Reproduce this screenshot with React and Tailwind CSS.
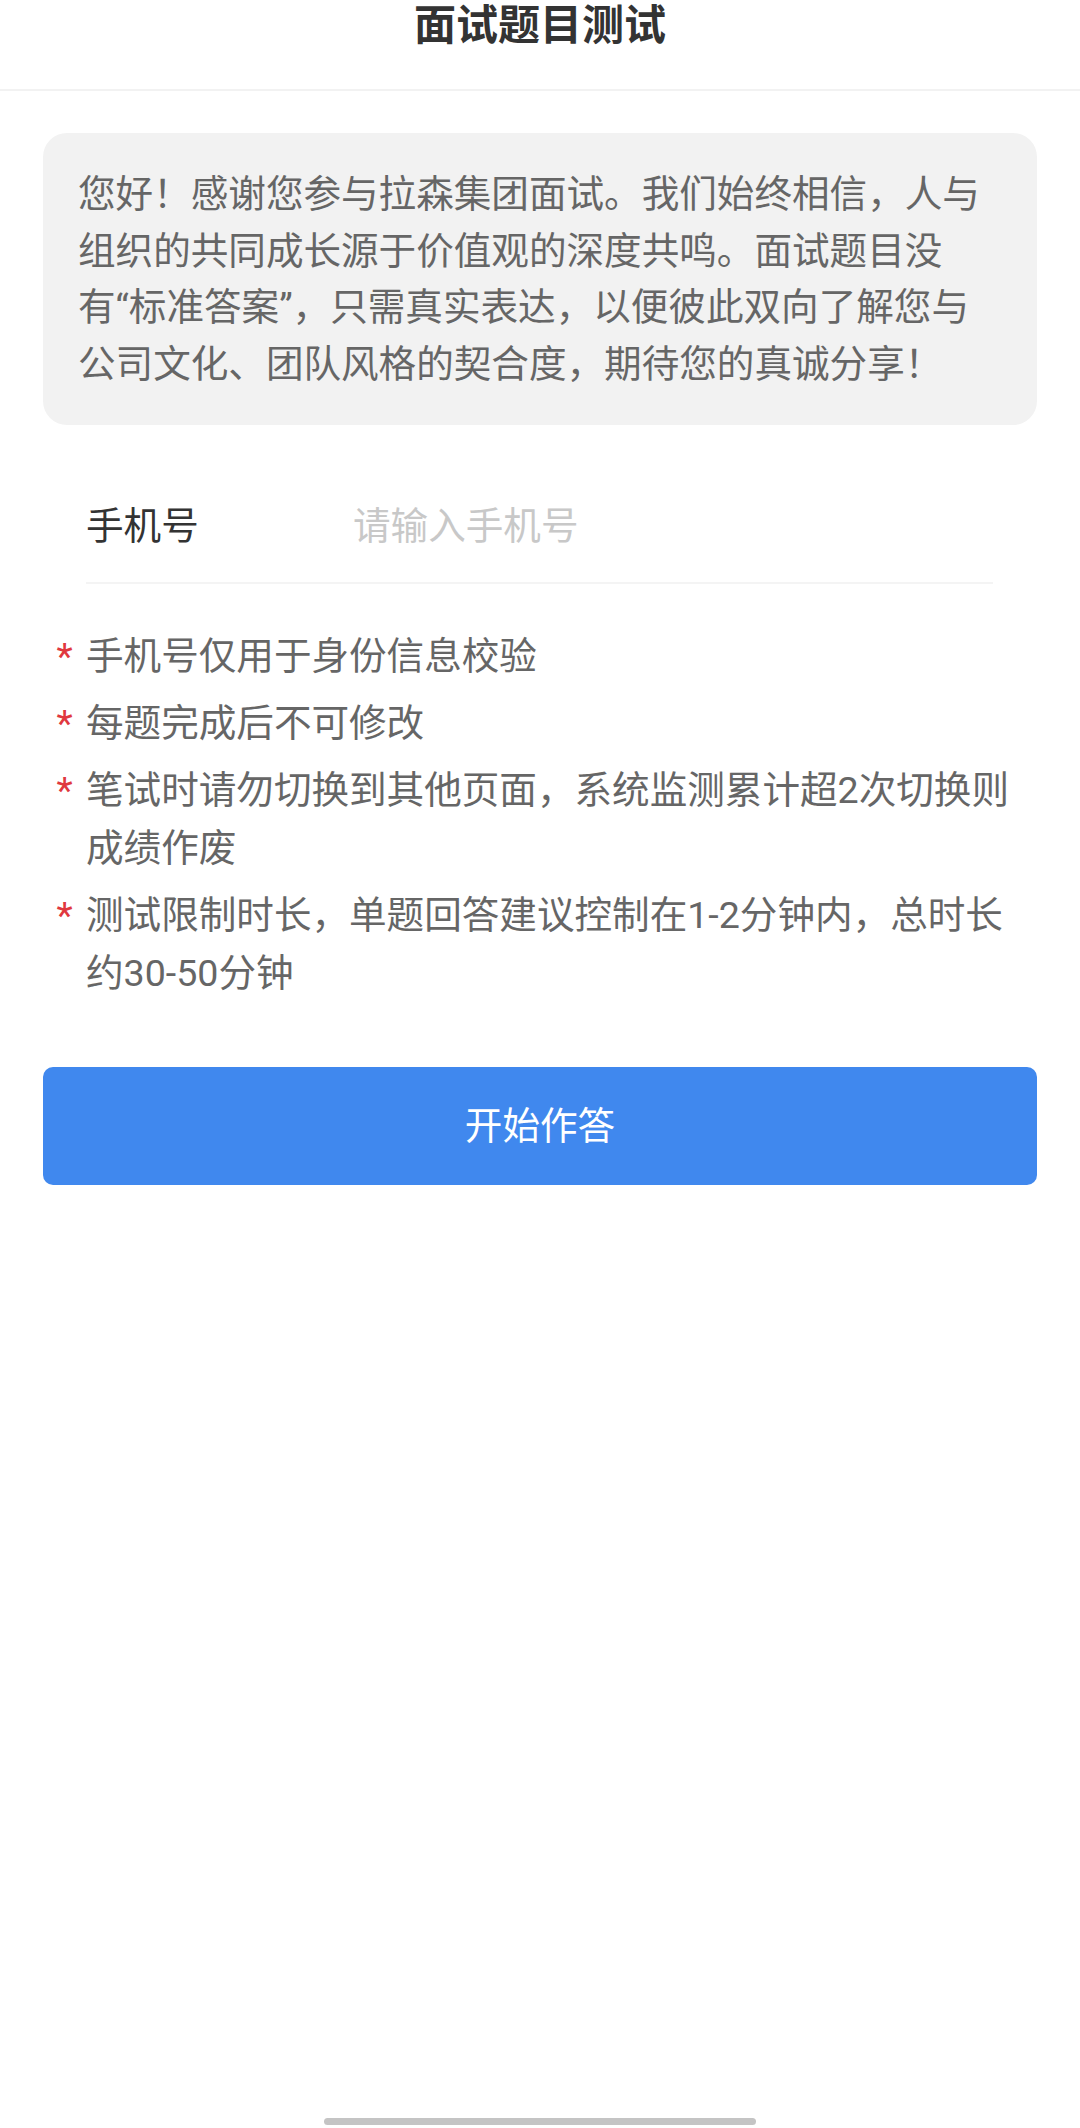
export default function App() {
  const font = "font-['Roboto','Noto_Sans_CJK_SC',sans-serif]";
  const intro = [
    "您好！感谢您参与拉森集团面试。我们始终相信，人与",
    "组织的共同成长源于价值观的深度共鸣。面试题目没",
    "有“标准答案”，只需真实表达，以便彼此双向了解您与",
    "公司文化、团队风格的契合度，期待您的真诚分享！",
  ];
  const notes = [
    "手机号仅用于身份信息校验",
    "每题完成后不可修改",
    "笔试时请勿切换到其他页面，系统监测累计超2次切换则成绩作废",
    "测试限制时长，单题回答建议控制在1-2分钟内，总时长约30-50分钟",
  ];
  return (
    <div className={`w-[1080px] min-h-[2128px] bg-white flex flex-col ${font}`}>
      <header className="h-[91px] border-b-2 border-[#f2f2f2] flex justify-center">
        <h1 className="text-[42px] font-bold leading-[52px] text-[#333333]">面试题目测试</h1>
      </header>

      <div className="mx-[43px] mt-[42px] rounded-[24px] bg-[#f2f2f2] pl-[35px] pr-[16px] pt-[33px] pb-[32px] text-[37.6px] leading-[56.7px] text-[#666666]">
        {intro.map((l, i) => (
          <span key={i} className="block whitespace-nowrap">{l}</span>
        ))}
      </div>

      <div className="ml-[86px] mr-[87px] mt-[36px] pt-[37px] pb-[27px] border-b-2 border-[#f4f4f4] flex items-center">
        <span className="w-[267px] shrink-0 text-[37.6px] leading-[57px] text-[#333333]">手机号</span>
        <input
          type="tel"
          placeholder="请输入手机号"
          className="flex-1 min-w-0 h-[57px] bg-transparent outline-none text-[37.6px] text-[#333333] placeholder:text-[#c8c8c8]"
        />
      </div>

      <ul className="mx-[43px] mt-[43px] flex flex-col gap-[9px] text-[37.6px] leading-[58px] text-[#666666]">
        {notes.map((n, i) => (
          <li key={i} className="flex">
            <span className="w-[43px] shrink-0 text-center text-[#e0383e]">*</span>
            <span className="flex-1 pr-[8px]">{n}</span>
          </li>
        ))}
      </ul>

      <button className="mx-[43px] mt-[65px] h-[118px] rounded-[10px] bg-[#4088ee] text-white text-[37.6px] flex items-center justify-center">
        开始作答
      </button>

      <div className="flex-1" />
      <div className="mx-auto mb-[3px] w-[432px] h-[7px] rounded-full bg-[#c4c4c4]" />
    </div>
  );
}
